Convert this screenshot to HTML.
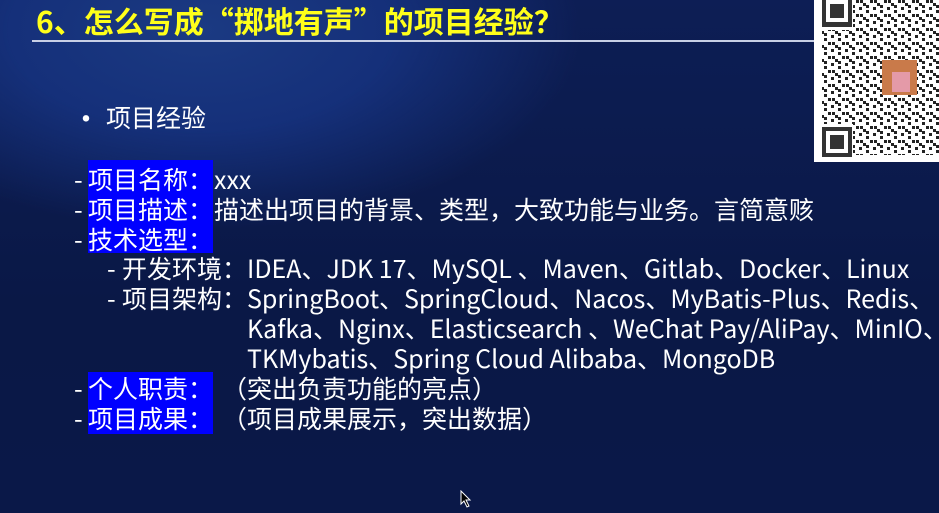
<!DOCTYPE html>
<html><head><meta charset="utf-8"><style>
*{margin:0;padding:0}
body{width:939px;height:513px;overflow:hidden;position:relative;
background:radial-gradient(ellipse 380px 200px at 200px 30px,#1b3a82 0%,#15307a 50%,rgba(12,28,75,0) 100%),linear-gradient(180deg,#0d1e55 0%,#0a1846 60%,#0a1848 100%);
font-family:"Noto Sans CJK SC","Liberation Sans",sans-serif;color:#fff}
.t{position:absolute;white-space:nowrap;font-size:25px;line-height:30px}
.hl{position:absolute;background:#0000ff}
</style></head><body>
<div class="t" style="left:36px;top:1px;font-size:30px;line-height:38px;color:#ffff1a;font-weight:bold">6、怎么写成“掷地有声”的项目经验？</div>
<div style="position:absolute;left:32px;top:40px;width:790px;height:2px;background:#c8d0e6"></div>
<div class="hl" style="left:88px;top:160px;width:125px;height:93px"></div>
<div class="hl" style="left:88px;top:372px;width:125px;height:62px"></div>
<div class="t" style="left:71px;top:102px;font-size:30px">•</div>
<div class="t" style="left:106px;top:102px">项目经验</div>
<div class="t" style="left:74px;top:164px">-</div><div class="t" style="left:88px;top:164px">项目名称：</div><div class="t" style="left:214px;top:164px">xxx</div>
<div class="t" style="left:74px;top:194px">-</div><div class="t" style="left:88px;top:194px">项目描述：</div><div class="t" style="left:214px;top:194px">描述出项目的背景、类型，大致功能与业务。言简意赅</div>
<div class="t" style="left:74px;top:224px">-</div><div class="t" style="left:88px;top:224px">技术选型：</div>
<div class="t" style="left:107px;top:253px">-</div><div class="t" style="left:122px;top:253px">开发环境：</div><div class="t" style="left:247px;top:253px">IDEA、JDK 17、MySQL 、Maven、Gitlab、Docker、Linux</div>
<div class="t" style="left:107px;top:283px">-</div><div class="t" style="left:122px;top:283px">项目架构：</div><div class="t" style="left:247px;top:283px">SpringBoot、SpringCloud、Nacos、MyBatis-Plus、Redis、</div>
<div class="t" style="left:247px;top:313px">Kafka、Nginx、Elasticsearch 、WeChat Pay/AliPay、MinIO、</div>
<div class="t" style="left:247px;top:343px">TKMybatis、Spring Cloud Alibaba、MongoDB</div>
<div class="t" style="left:74px;top:373px">-</div><div class="t" style="left:88px;top:373px">个人职责：</div><div class="t" style="left:222px;top:373px">（突出负责功能的亮点）</div>
<div class="t" style="left:74px;top:403px">-</div><div class="t" style="left:88px;top:403px">项目成果：</div><div class="t" style="left:222px;top:403px">（项目成果展示，突出数据）</div>
<svg style="position:absolute;left:814px;top:0" width="125" height="162" viewBox="0 0 125 162">
<defs><pattern id="q" width="14" height="14" patternUnits="userSpaceOnUse">
<rect x="0" y="0" width="3" height="3" fill="#222"/><rect x="7" y="3" width="3" height="3" fill="#222"/><rect x="3" y="7" width="3" height="3" fill="#222"/><rect x="10" y="10" width="3" height="3" fill="#222"/><rect x="4" y="0" width="3" height="3" fill="#222"/><rect x="10" y="5" width="3" height="3" fill="#222"/></pattern></defs>
<rect width="125" height="162" fill="#fff"/>
<rect x="8" y="0" width="117" height="155" fill="url(#q)"/>
<rect x="6" y="0" width="33" height="30" fill="#fff"/>
<rect x="8" y="0" width="30" height="27" fill="#333"/><rect x="12" y="0" width="22" height="22" fill="#fff"/><rect x="16" y="4" width="14" height="14" fill="#333"/>
<rect x="6" y="124" width="33" height="36" fill="#fff"/>
<rect x="8" y="127" width="30" height="30" fill="#333"/><rect x="12" y="131" width="22" height="22" fill="#fff"/><rect x="16" y="135" width="14" height="14" fill="#333"/>
<rect x="68" y="60" width="35" height="35" fill="#c97a4a"/><rect x="78" y="72" width="18" height="20" fill="#e49aa8"/>
</svg>
<svg style="position:absolute;left:460px;top:490px" width="12" height="18"><path d="M1 1 L1 14 L4 11 L7 17 L9 16 L6 10 L10 10 Z" fill="#000" stroke="#fff" stroke-width="1"/></svg>
</body></html>
